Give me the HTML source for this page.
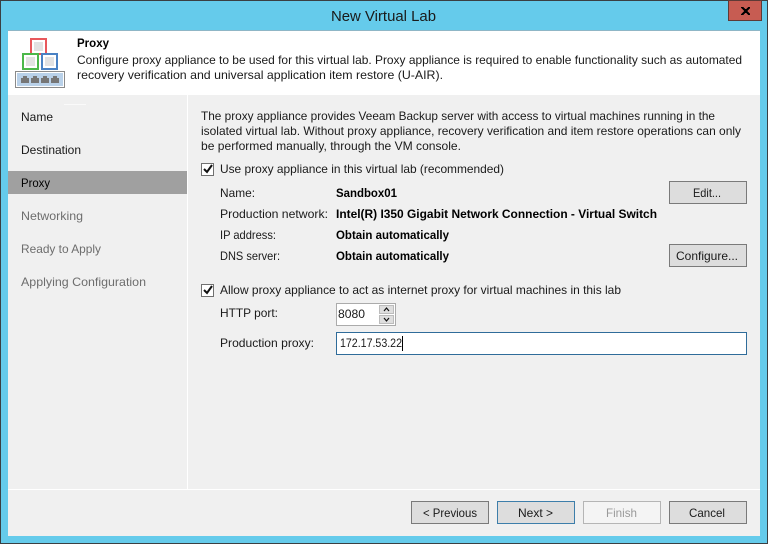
<!DOCTYPE html>
<html><head><meta charset="utf-8"><style>
html,body{margin:0;padding:0;width:768px;height:544px;overflow:hidden;background:#65cbeb}
svg{display:block}
text{font-family:"Liberation Sans",sans-serif;font-size:12px;fill:#1a1a1a}
.b{font-weight:bold;fill:#000}
.d{fill:#6d6d6d}
</style></head><body>
<svg width="768" height="544" viewBox="0 0 768 544" xmlns="http://www.w3.org/2000/svg" shape-rendering="crispEdges">
<rect x="0.5" y="0.5" width="767" height="543" fill="#65cbeb" stroke="#3a3f42"/>
<rect x="728.5" y="0.5" width="33" height="20" fill="#c75c52" stroke="#5e3a36"/>
<path d="M741 7h2l2 2h1l2-2h2v1l-3 3 3 3v1h-2l-2-2h-1l-2 2h-2v-1l3-3-3-3z" fill="#000"/>
<text x="331" y="21" style="font-size:15px" textLength="105" lengthAdjust="spacingAndGlyphs">New Virtual Lab</text>

<rect x="8" y="30" width="752" height="1" fill="#8fb6c6"/>
<rect x="8" y="31" width="752" height="505" fill="#f0f0f0"/>
<rect x="8" y="31" width="752" height="64" fill="#fff"/>

<!-- icon -->
<rect x="30" y="38" width="17" height="17" fill="#e8585c"/><rect x="32" y="40" width="13" height="13" fill="#fff"/><rect x="34" y="42" width="9" height="9" fill="#e2e2e2"/>
<rect x="22" y="53" width="17" height="17" fill="#4cb84a"/><rect x="24" y="55" width="13" height="13" fill="#fff"/><rect x="26" y="57" width="9" height="9" fill="#e2e2e2"/>
<rect x="41" y="53" width="17" height="17" fill="#4a82c4"/><rect x="43" y="55" width="13" height="13" fill="#fff"/><rect x="45" y="57" width="9" height="9" fill="#e2e2e2"/>
<rect x="15.5" y="71.5" width="49" height="16" fill="#fff" stroke="#8a8a8a"/>
<rect x="17" y="73" width="46" height="13" fill="#b9d1e9"/>
<g fill="#767676">
<path d="M23 76h4v2h2v5h-8v-5h2z"/>
<path d="M33 76h4v2h2v5h-8v-5h2z"/>
<path d="M43 76h4v2h2v5h-8v-5h2z"/>
<path d="M53 76h4v2h2v5h-8v-5h2z"/>
</g>

<text class="b" x="77" y="47" textLength="32" lengthAdjust="spacingAndGlyphs">Proxy</text>
<text x="77" y="64" textLength="665" lengthAdjust="spacingAndGlyphs">Configure proxy appliance to be used for this virtual lab. Proxy appliance is required to enable functionality such as automated</text>
<text x="77" y="79" textLength="366" lengthAdjust="spacingAndGlyphs">recovery verification and universal application item restore (U-AIR).</text>

<!-- nav -->
<rect x="187" y="95" width="1" height="394" fill="#fff"/>
<rect x="8" y="489" width="752" height="1" fill="#fff"/>
<rect x="64" y="104" width="22" height="1" fill="#fafafa"/>
<rect x="8" y="171" width="179" height="23" fill="#a0a0a0"/>
<text x="21" y="121" textLength="32" lengthAdjust="spacingAndGlyphs">Name</text>
<text x="21" y="154" textLength="60" lengthAdjust="spacingAndGlyphs">Destination</text>
<text x="21" y="187" style="fill:#000" textLength="29" lengthAdjust="spacingAndGlyphs">Proxy</text>
<text class="d" x="21" y="220" textLength="62" lengthAdjust="spacingAndGlyphs">Networking</text>
<text class="d" x="21" y="253" textLength="80" lengthAdjust="spacingAndGlyphs">Ready to Apply</text>
<text class="d" x="21" y="286" textLength="125" lengthAdjust="spacingAndGlyphs">Applying Configuration</text>

<!-- main -->
<text x="201" y="120" textLength="514" lengthAdjust="spacingAndGlyphs">The proxy appliance provides Veeam Backup server with access to virtual machines running in the</text>
<text x="201" y="135" textLength="540" lengthAdjust="spacingAndGlyphs">isolated virtual lab. Without proxy appliance, recovery verification and item restore operations can only</text>
<text x="201" y="150" textLength="260" lengthAdjust="spacingAndGlyphs">be performed manually, through the VM console.</text>

<rect x="201.5" y="163.5" width="12" height="12" fill="#fff" stroke="#707070"/>
<path d="M204 169l3 3 5-7" fill="none" stroke="#111" stroke-width="2" shape-rendering="auto"/>
<text x="220" y="173" textLength="284" lengthAdjust="spacingAndGlyphs">Use proxy appliance in this virtual lab (recommended)</text>

<text x="220" y="197" textLength="35" lengthAdjust="spacingAndGlyphs">Name:</text>
<text x="220" y="218" textLength="108" lengthAdjust="spacingAndGlyphs">Production network:</text>
<text x="220" y="239" textLength="56" lengthAdjust="spacingAndGlyphs">IP address:</text>
<text x="220" y="260" textLength="60" lengthAdjust="spacingAndGlyphs">DNS server:</text>
<text class="b" x="336" y="197" textLength="61" lengthAdjust="spacingAndGlyphs">Sandbox01</text>
<text class="b" x="336" y="218" textLength="321" lengthAdjust="spacingAndGlyphs">Intel(R) I350 Gigabit Network Connection - Virtual Switch</text>
<text class="b" x="336" y="239" textLength="113" lengthAdjust="spacingAndGlyphs">Obtain automatically</text>
<text class="b" x="336" y="260" textLength="113" lengthAdjust="spacingAndGlyphs">Obtain automatically</text>

<rect x="669.5" y="181.5" width="77" height="22" fill="#dddddd" stroke="#7a7a7a"/>
<text x="693" y="197" textLength="28" lengthAdjust="spacingAndGlyphs">Edit...</text>
<rect x="669.5" y="244.5" width="77" height="22" fill="#dddddd" stroke="#7a7a7a"/>
<text x="676" y="260" textLength="62" lengthAdjust="spacingAndGlyphs">Configure...</text>

<rect x="201.5" y="284.5" width="12" height="12" fill="#fff" stroke="#707070"/>
<path d="M204 290l3 3 5-7" fill="none" stroke="#111" stroke-width="2" shape-rendering="auto"/>
<text x="220" y="294" textLength="401" lengthAdjust="spacingAndGlyphs">Allow proxy appliance to act as internet proxy for virtual machines in this lab</text>

<text x="220" y="317" textLength="58" lengthAdjust="spacingAndGlyphs">HTTP port:</text>
<rect x="336.5" y="303.5" width="59" height="22" fill="#fff" stroke="#ababab"/>
<text x="338" y="318" textLength="27" lengthAdjust="spacingAndGlyphs">8080</text>
<rect x="379.5" y="305.5" width="14" height="8" fill="#dedede" stroke="#bcbcbc"/>
<rect x="379.5" y="315.5" width="14" height="8" fill="#dedede" stroke="#bcbcbc"/>
<path d="M384 311l2.5-3 2.5 3" fill="none" stroke="#111" stroke-width="1.2" shape-rendering="auto"/>
<path d="M384 318l2.5 3 2.5-3" fill="none" stroke="#111" stroke-width="1.2" shape-rendering="auto"/>

<text x="220" y="347" textLength="94" lengthAdjust="spacingAndGlyphs">Production proxy:</text>
<rect x="336.5" y="332.5" width="410" height="22" fill="#fff" stroke="#2f6c9a"/>
<text x="340" y="347" textLength="62" lengthAdjust="spacingAndGlyphs">172.17.53.22</text>
<rect x="402" y="336" width="1" height="15" fill="#000"/>

<!-- footer buttons -->
<rect x="411.5" y="501.5" width="77" height="22" fill="#dddddd" stroke="#7a7a7a"/>
<text x="423" y="517" textLength="54" lengthAdjust="spacingAndGlyphs">&lt; Previous</text>
<rect x="497.5" y="501.5" width="77" height="22" fill="#dddddd" stroke="#3d7eaa"/>
<text x="518" y="517" textLength="35" lengthAdjust="spacingAndGlyphs">Next &gt;</text>
<rect x="583.5" y="501.5" width="77" height="22" fill="#f4f4f4" stroke="#b5b5b5"/>
<text x="606" y="517" style="fill:#9a9a9a" textLength="31" lengthAdjust="spacingAndGlyphs">Finish</text>
<rect x="669.5" y="501.5" width="77" height="22" fill="#dddddd" stroke="#7a7a7a"/>
<text x="689" y="517" textLength="36" lengthAdjust="spacingAndGlyphs">Cancel</text>
</svg>
</body></html>
